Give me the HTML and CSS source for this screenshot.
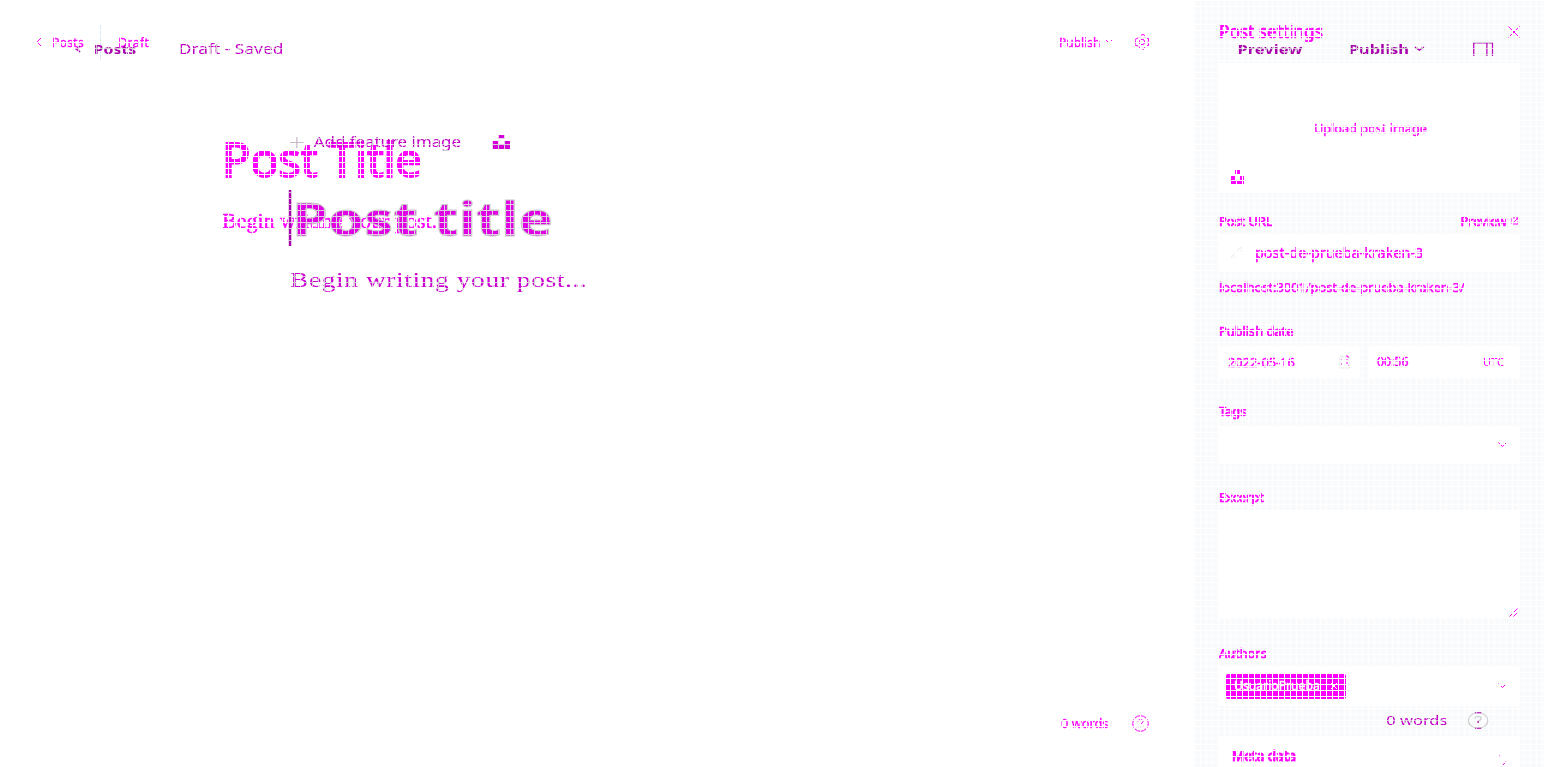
FILE: index.html
```
<!DOCTYPE html>
<html lang="en">
<head>
<meta charset="utf-8">
<title>Post editor</title>
<link rel="stylesheet" href="styles.css">
</head>
<body>
<div class="stack">
  <div class="layer editor">
    <main class="canvas">
      <header class="bar">
        <svg class="back" width="6" height="10" viewBox="0 0 6 10"><path d="M5 1 1 5l4 4"/></svg>
        <span class="posts">Posts</span>
        <span class="divider"></span>
        <span class="draft">Draft</span>
        <span class="publish">Publish</span>
        <svg class="chev" width="8" height="6" viewBox="0 0 8 6"><path d="m1 1 3 3 3-3"/></svg>
        <svg class="gear" width="16" height="17" viewBox="0 0 16 17"><path d="M5 3.500 7 1l3-.5 1 3M12 4.500h2.500v3L13.500 8l1 2v1.500H12M11 13l-2 3M7 16l-2-3.500M4 12l-3-1 .5-3L1 5.500 4 4"/><circle cx="8" cy="8" r="2.700"/></svg>
      </header>
      <h1 class="title">Post Title</h1>
      <p class="lead">Begin writing your post...</p>
      <footer class="status">
        <span class="words">0 words</span>
        <svg width="17" height="17" viewBox="0 0 17 17"><circle cx="8.500" cy="8.500" r="7.800"/><path d="M6 6.500Q6 4.500 8.500 4.500T11 6.500Q11 8 8.500 9v2M8.500 12v1"/></svg>
      </footer>
    </main>
    <aside class="panel">
      <div class="head"><span class="heading">Post settings</span><svg width="12" height="12" viewBox="0 0 12 12"><path d="m.5.5 11 11m0-11-11 11"/></svg></div>
      <div class="box upload">
        <span class="upload-text">Upload post image</span>
        <svg class="unsplash" width="13" height="14" viewBox="0 0 13 14"><path d="M4 0h5v4H4zM0 6h4v4h5V6h4v8H0z"/></svg>
      </div>
      <div class="label url-label"><span class="t-url">Post URL</span><span class="preview"><span class="t-prev">Preview</span><svg width="8" height="8" viewBox="0 0 8 8"><path d="M4 1H1v6h6V4M3 5l4-4M5 1h2v2"/></svg></span></div>
      <div class="box url">
        <svg width="14" height="14" viewBox="0 0 14 14"><path class="pale" d="M5 8 2 10q-1 2 1 3l3-2M7 5l3-3q3-1 3 1L9 7"/><path d="M6 8l2-2"/></svg>
        <span class="slug">post-de-prueba-kraken-3</span>
      </div>
      <div class="link"><span class="t-link">localhost:3001/post-de-prueba-kraken-3/</span></div>
      <div class="label date-label"><span class="t-date">Publish date</span></div>
      <div class="dates">
        <div class="box date"><span class="t-day">2022-05-16</span><svg width="11" height="14" viewBox="0 0 11 14"><path class="pale" d="M1 2h9v11H1zM3 0v3"/><path d="M7 1h2v2M2 5h1m4 0h2M2 9h1m4-1h2m0 3h1"/></svg></div>
        <div class="box time"><span class="t-time">00:56</span><span class="utc">UTC</span></div>
      </div>
      <div class="label tags-label"><span class="t-tags">Tags</span></div>
      <div class="box tags"><svg width="9" height="6" viewBox="0 0 9 6"><path d="m.5.5 4 4 4-4"/></svg></div>
      <div class="label ex-label"><span class="t-ex">Excerpt</span></div>
      <div class="box excerpt"><svg width="9" height="9" viewBox="0 0 9 9"><path d="m.5 8.500 8-8m-4 8 4-4"/></svg></div>
      <div class="label au-label"><span class="t-au">Authors</span></div>
      <div class="box authors"><span class="chip"><span class="t-chip">UsuarioPrueba</span><svg width="8" height="8" viewBox="0 0 8 8"><path d="m1 1 6 6m0-6-6 6"/></svg></span><svg width="9" height="6" viewBox="0 0 9 6"><path d="m.5.5 4 4 4-4"/></svg></div>
      <div class="box meta"><span class="t-meta">Meta data</span><svg width="8" height="12" viewBox="0 0 8 12"><path d="M.5 1 2 3m2 8 3.500-4"/></svg></div>
    </aside>
  </div>
  <div class="layer grid"></div>
  <div class="layer second">
    <header class="bar2">
      <svg class="back2" width="5" height="8" viewBox="0 0 5 8"><path d="M4 1 1 4l3 3"/></svg>
      <span class="posts2">Posts</span>
      <span class="draft2">Draft - Saved</span>
      <span class="preview2">Preview</span>
      <span class="publish2">Publish</span>
      <svg class="chev2" width="9" height="6" viewBox="0 0 9 6"><path d="m1 1 3.500 3L8 1"/></svg>
      <svg class="side2" width="17" height="14" viewBox="0 0 17 14"><path d="M1 14V1h15v13M11.500 1v13"/></svg>
    </header>
    <div class="feature2">
      <svg width="11" height="11" viewBox="0 0 11 11"><path d="M5.500 0v11M0 5.500h11"/></svg>
      <span class="add2">Add feature image</span>
      <svg class="unsplash" width="14" height="14" viewBox="0 0 14 14"><path d="M4.500 0h5v3.500h-5zM0 6h4.500v3.500h5V6H14v8H0z"/></svg>
    </div>
    <div class="title-row"><span class="caret"></span><h1 class="title2">Post title</h1></div>
    <p class="lead2">Begin writing your post...</p>
    <footer class="status2">
      <span class="words2">0 words</span>
      <svg width="17" height="17" viewBox="0 0 17 17"><circle cx="8.500" cy="8.500" r="7.800"/><path d="M6 6.500Q6 4.500 8.500 4.500T11 6.500Q11 8 8.500 9v1"/><path class="dark" d="M8.500 9v2M6 .8h5M6 16.200h5"/></svg>
    </footer>
  </div>
  <div class="layer grid soft"></div>
</div>
</body>
</html>
```
FILE: styles.css
```
* { box-sizing: border-box; }
body { margin: 0; background: #fff; overflow: hidden; font-family: "Noto Sans", sans-serif; }
h1, p { margin: 0; }
span { white-space: nowrap; }
.stack { display: grid; width: 1544px; height: 767px; overflow: hidden; isolation: isolate; }
.layer { grid-area: 1 / 1; height: 767px; }
svg { display: block; fill: none; stroke: #f0f; stroke-width: 1; flex: none; }

.editor { display: flex; color: #f0f; font-size: 12px; line-height: 20px; }
.canvas { width: 1195px; display: flex; flex-direction: column; -webkit-text-stroke: .3px #f0f; }
.bar { display: flex; align-items: center; height: 84px; padding-left: 36px; }
.posts { margin-left: 10px; width: 48px; font-size: 12.500px; }
.divider { width: 1px; height: 35px; background: #dfeaf7; }
.draft { margin-left: 17px; width: 941px; font-size: 13px; }
.publish { width: 46px; }
.publish, .posts { padding-top: 1px; }
.gear { margin-left: 21px; }
.title { margin: 40px 0 0 222px; height: 70px; font-size: 47px; font-weight: 400; line-height: 70px; letter-spacing: -.3px; white-space: nowrap; -webkit-text-stroke: 1.800px #f0f; }
.lead { margin: 12px 0 0 222px; font: 22px/30px "Liberation Serif", serif; white-space: nowrap; -webkit-text-stroke: .4px #f0f; }
.status { margin: auto 0 34px 1061px; display: flex; align-items: center; height: 20px; font-size: 12.800px; }
.words { width: 71px; }

.panel { width: 349px; height: 767px; overflow: hidden; padding: 0 24px 0 23px; background: #f9fafc; display: flex; flex-direction: column; font-size: 12.800px; }
.panel > * { flex: none; }
.head { display: flex; justify-content: space-between; align-items: center; height: 63px; padding-left: 1px; font-size: 17.200px; }
.heading { -webkit-text-stroke: .7px #f0f; }
.box { background: #fff; border-radius: 3px; flex: none; }
.label { display: flex; justify-content: space-between; align-items: center; padding-left: 1px; -webkit-text-stroke: .7px #f0f; }
.upload { height: 129px; display: flex; flex-direction: column; padding: 55px 0 0 96px; -webkit-text-stroke: .4px #f0f; font-size: 12.700px; }
.upload .unsplash { margin: 32px 0 0 -83px; }
.unsplash { fill: #f0f; stroke: none; }
.url-label { height: 42px; padding: 15px 2px 0 1px; }
.preview { display: flex; align-items: center; gap: 4px; margin-right: -1px; }
.url { height: 38px; display: flex; align-items: center; gap: 11px; padding-left: 12px; font-size: 14.400px; -webkit-text-stroke: .4px #f0f; }
.pale { stroke: #e3edeb; }
.link { height: 31px; padding: 0 0 0 1px; line-height: 31px; -webkit-text-stroke: .5px #f0f; }
.date-label { height: 43px; padding-top: 12px; }
.dates { display: flex; gap: 8px; height: 32px; -webkit-text-stroke: .4px #f0f; }
.date, .time { display: flex; justify-content: space-between; align-items: center; }
.date { width: 142px; padding: 0 10px; }
.time { width: 152px; padding: 0 16px 0 9px; }
.t-time { font-size: 12.300px; }
.utc { font-size: 11px; -webkit-text-stroke: 0; }
.tags-label { height: 48px; padding-top: 18px; }
.tags, .authors { display: flex; justify-content: flex-end; align-items: center; height: 38px; padding-right: 13px; }
.ex-label { height: 46px; padding-top: 20px; }
.excerpt { height: 109px; display: flex; justify-content: flex-end; align-items: flex-end; padding: 2px; }
.au-label { height: 47px; padding-top: 21px; }
.authors { height: 40px; justify-content: space-between; padding-left: 8px; }
.chip { display: flex; align-items: center; justify-content: space-between; width: 120px; height: 25px; padding: 0 8px; border-radius: 2px; background: #f0f; color: #fff; }
.chip svg { stroke: #fff; }
.t-chip { font-size: 12.200px; -webkit-text-stroke: .4px #fff; }
.meta { margin-top: 30px; height: 60px; display: flex; justify-content: space-between; padding: 10px 13px 0 14px; font-size: 13.500px; }
.meta span { -webkit-text-stroke: .9px #f0f; }
.meta svg { margin-top: 8px; }

.grid { background: repeating-linear-gradient(90deg, #fff 0 1px, transparent 1px 6px), repeating-linear-gradient(#fff 0 1px, transparent 1px 6px); }
.soft { background: repeating-linear-gradient(90deg, #ccc 0 1px, transparent 1px 6px), repeating-linear-gradient(#ccc 0 1px, transparent 1px 6px); mix-blend-mode: lighten; }

/* Horizontally stretched view: every x inside is 1/1.25 of its drawn position. */
.second { width: 1235px; transform: scaleX(1.25); transform-origin: 0 0; display: flex; flex-direction: column; color: #c400c8; font-size: 13.500px; line-height: 20px; }
.second svg { stroke: #b800bc; }
.bar2 { display: flex; align-items: center; height: 98px; padding-left: 60px; }
.back2, .chev2 { stroke-width: 1.500; }
.posts2, .preview2, .publish2 { color: #a800ac; font-weight: 700; }
.posts2 { margin-left: 10px; width: 68px; font-size: 12.700px; }
.draft2 { width: 847px; font-size: 13.900px; }
.preview2 { width: 89px; font-size: 13.200px; }
.publish2 { width: 52px; font-size: 13.200px; }
.side2 { margin-left: 38px; }
.feature2 { display: flex; align-items: center; height: 20px; margin: 34px 0 0 232px; }
.second .feature2 > svg:first-child { stroke: #c9b8c9; }
.add2 { margin-left: 8px; width: 143px; }
.second .unsplash { fill: #d400d8; stroke: none; }
.title-row { display: flex; align-items: center; height: 56px; margin: 38px 0 0 231.200px; }
.caret { width: 1.600px; height: 56px; background: #a800ac; }
.title2 { margin-left: 1px; font-size: 46px; line-height: 56px; font-weight: 700; letter-spacing: .15px; color: #e000e4; -webkit-text-stroke: 1px #ccc; white-space: nowrap; }
.lead2 { margin: 19px 0 0 232px; font: 22px/30px "Liberation Serif", serif; letter-spacing: .45px; color: #cc00d0; white-space: nowrap; }
.status2 { margin: auto 0 37px 1109px; display: flex; align-items: center; height: 20px; font-size: 13.200px; }
.words2 { width: 65px; }
.second .status2 svg { stroke: #ccc; }
.second .dark { stroke: #b800bc; }
```
